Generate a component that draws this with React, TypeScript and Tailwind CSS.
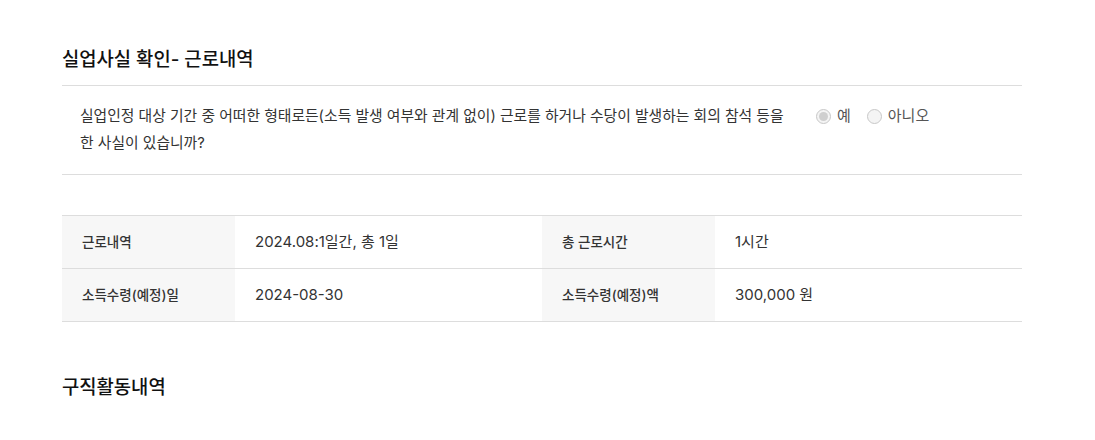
const font = { fontFamily: '"Inter", "Noto Sans CJK KR", "Noto Sans", sans-serif' };

type Cell = { label: string; value: string };

const rows: Cell[][] = [
    [
        { label: "근로내역", value: "2024.08:1일간, 총 1일" },
        { label: "총 근로시간", value: "1시간" },
    ],
    [
        { label: "소득수령(예정)일", value: "2024-08-30" },
        { label: "소득수령(예정)액", value: "300,000 원" },
    ],
];

const Radio = ({ checked, label }: { checked?: boolean; label: string }) => (
    <label className="flex items-center gap-[6px]">
        <span className="flex h-[15px] w-[15px] items-center justify-center rounded-full border border-[#c8c8c8] bg-[#f4f4f4]">
            {checked && <span className="h-[9px] w-[9px] rounded-full bg-[#cfcfcf]" />}
        </span>
        <span className="text-[15px] text-[#555]">{label}</span>
    </label>
);

export default function App() {
    return (
        <div className="min-h-screen bg-white text-[#222]" style={font}>
            <div className="ml-[62px] w-[960px] pt-[46px]">
                {/* 실업사실 확인 */}
                <h2 className="pb-[11px] text-[18.8px] font-medium leading-[28px] text-[#111]">
                    실업사실 확인- 근로내역
                </h2>
                <div className="flex items-start border-y border-[#dddddd] py-[17px] pl-[18px]">
                    <p className="w-[716px] text-[14.8px] leading-[27px] text-[#333]">
                        실업인정 대상 기간 중 어떠한 형태로든(소득 발생 여부와 관계 없이) 근로를 하거나 수당이 발생하는 회의 참석 등을 한 사실이 있습니까?
                    </p>
                    <div className="ml-[20px] flex h-[27px] items-center gap-[16px]">
                        <Radio checked label="예" />
                        <Radio label="아니오" />
                    </div>
                </div>

                {/* 근로내역 표 */}
                <div className="mt-[40px] border-t border-[#dddddd]">
                    {rows.map((row, i) => (
                        <div key={i} className="grid grid-cols-[173px_307px_173px_307px] border-b border-[#dddddd]">
                            {row.map((c) => (
                                <>
                                    <div className="flex h-[52px] items-center bg-[#f7f7f7] pl-[20px] text-[13.5px] font-medium text-[#333]">
                                        {c.label}
                                    </div>
                                    <div className="flex h-[52px] items-center pl-[20px] text-[15px] text-[#333]">
                                        {c.value}
                                    </div>
                                </>
                            ))}
                        </div>
                    ))}
                </div>

                <h2 className="mt-[52px] text-[18.8px] font-medium leading-[28px] text-[#111]">구직활동내역</h2>
            </div>
        </div>
    );
}
